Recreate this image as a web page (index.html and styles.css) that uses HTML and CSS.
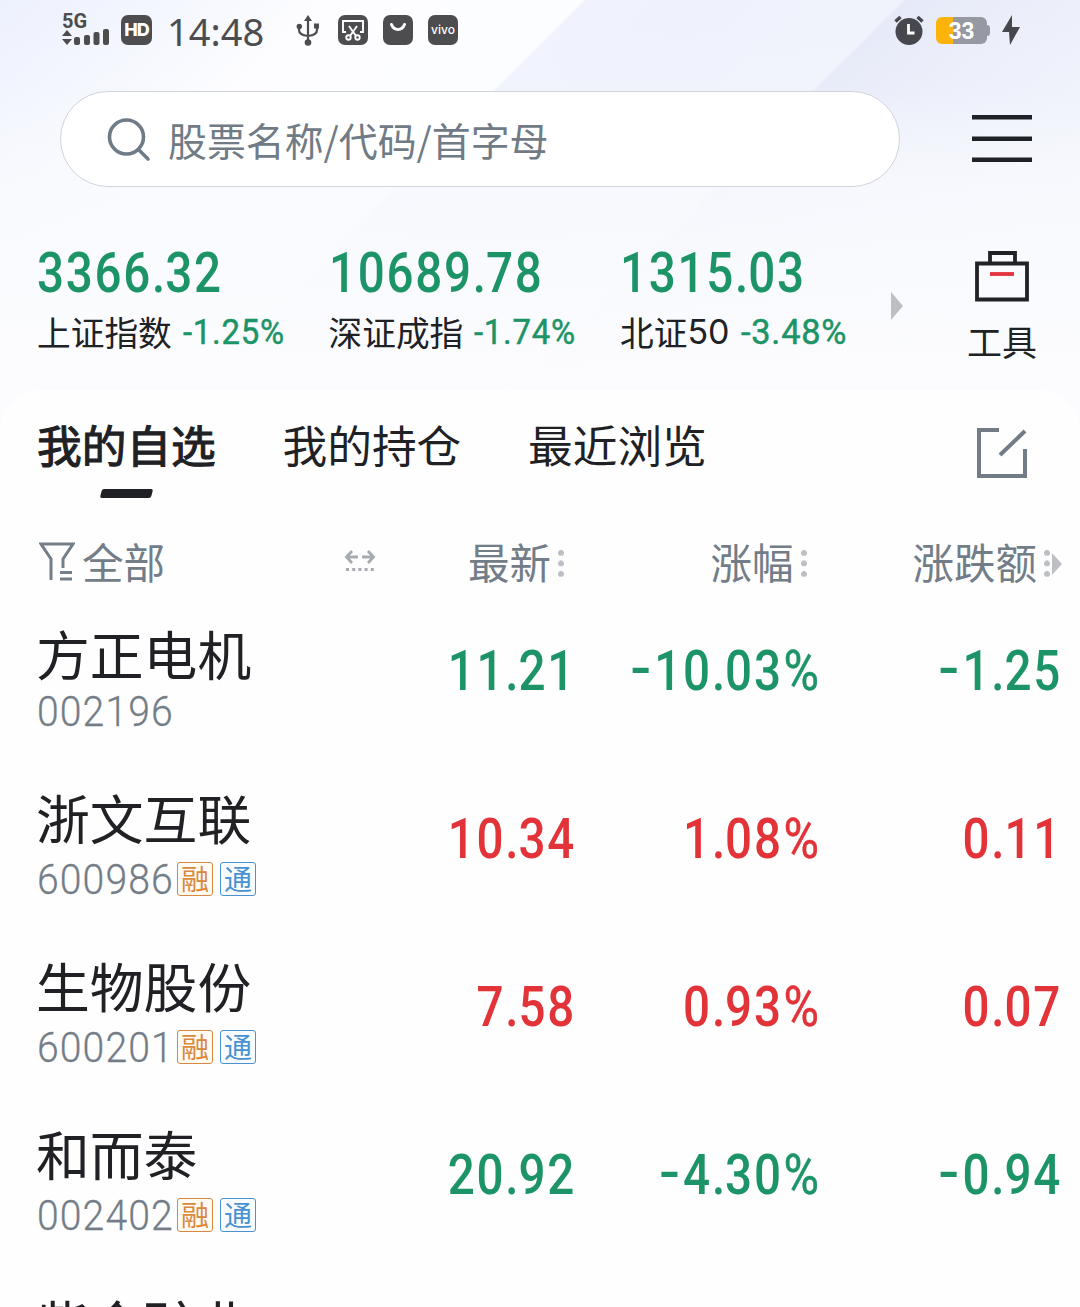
FILE: index.html
```html
<!DOCTYPE html>
<html lang="zh-CN">
<head>
<meta charset="utf-8">
<title>我的自选</title>
<link rel="stylesheet" href="styles.css">
</head>
<body>
<div class="app">
  <header class="top">
    <div class="status">
      <div class="signal">
        <span class="net">5G</span>
        <svg width="48" height="17" viewBox="0 0 48 17" fill="#4d4d4f"><path d="M5 2l5 6H0zM5 17l5-6H0z"/><rect x="12" y="9" width="6" height="8" rx="2"/><rect x="22" y="7" width="6" height="10" rx="2"/><rect x="31.500" y="4" width="6" height="13" rx="2"/><rect x="41" y="1" width="6" height="16" rx="2"/></svg>
      </div>
      <span class="chip hd">HD</span>
      <span class="time">14:48</span>
      <svg class="usb" width="24" height="32" viewBox="0 0 24 32" fill="none" stroke="#4d4d4f" stroke-width="2.200"><path d="M12 5v22M3 12v3q0 5 9 6M21 11v4q0 5-9 6"/><path d="M12 0l4 6H8z" fill="#4d4d4f" stroke="none"/><circle cx="3.300" cy="11.500" r="2.700" fill="#4d4d4f" stroke="none"/><path d="M18 8.500h5v5h-5z" fill="#4d4d4f" stroke="none"/><circle cx="12" cy="27.500" r="3.300" fill="#4d4d4f" stroke="none"/></svg>
      <span class="chip"><svg width="30" height="30" viewBox="0 0 30 30" fill="none" stroke="#fff" stroke-width="1.900"><path d="M8 17H5V6h20v11h-3M11 11l7 10M19 11l-7 10"/><circle cx="10.500" cy="22.500" r="2.200"/><circle cx="19.500" cy="22.500" r="2.200"/></svg></span>
      <span class="chip"><svg width="30" height="30" viewBox="0 0 30 30" fill="none" stroke="#fff" stroke-width="3" stroke-linecap="round"><path d="M8.500 9.500q2 5 6.500 5t6.500-5"/></svg></span>
      <span class="chip vivo">vivo</span>
      <div class="right">
        <svg width="30" height="30" viewBox="0 0 30 30"><circle cx="15" cy="16.500" r="13.500" fill="#47484d"/><path d="M1.500 6.500l5-4.500M23.500 2l5 4.500" stroke="#47484d" stroke-width="3.500"/><path d="M14.500 9v9h6" fill="none" stroke="#fff" stroke-width="2.800"/></svg>
        <span class="battery">33</span>
        <svg width="20" height="30" viewBox="0 0 20 30" fill="#47484d"><path d="M11 0L1 17h7l1 13L19 12h-8z"/></svg>
      </div>
    </div>

    <div class="search-row">
      <div class="search">
        <svg width="46" height="46" viewBox="0 0 46 46" fill="none" stroke="#6f7b87" stroke-width="3.600" stroke-linecap="round"><circle cx="19.500" cy="21" r="17"/><path d="M32 34L41 43"/></svg>
        <span>股票名称/代码/首字母</span>
      </div>
      <svg class="menu" width="60" height="48" viewBox="0 0 60 48" fill="#1e2125"><path d="M0 0h60v4.500H0zM0 21.500h60V26H0zM0 42.500h60V47H0z"/></svg>
    </div>

    <div class="indices">
      <div class="index">
        <div class="num big down">3366<i class="pt">.</i>32</div>
        <div class="label">上证指数<span class="num pct down">-1.25%</span></div>
      </div>
      <div class="index">
        <div class="num big down">10689<i class="pt">.</i>78</div>
        <div class="label">深证成指<span class="num pct down">-1.74%</span></div>
      </div>
      <div class="index third">
        <div class="num big down">1315<i class="pt">.</i>03</div>
        <div class="label">北证<span class="fifty">50</span><span class="num pct down">-3.48%</span></div>
      </div>
      <svg class="next" width="12" height="28" viewBox="0 0 12 28" fill="#bcbfc4"><path d="M0 0l12 14L0 28z"/></svg>
      <div class="tools">
        <svg width="56" height="52" viewBox="0 0 56 52" fill="none" stroke="#202226" stroke-width="3.800"><path d="M3 12.500h50v36H3zM16 12.500V2h25v10.500"/><path d="M16 23h24" stroke="#e2323c"/></svg>
        <span>工具</span>
      </div>
    </div>
  </header>

  <main class="panel">
    <nav class="tabs">
      <span class="tab active">我的自选</span>
      <span class="tab">我的持仓</span>
      <span class="tab">最近浏览</span>
      <svg class="edit" width="52" height="50" viewBox="0 0 52 50" fill="none" stroke="#727c86" stroke-width="4"><path d="M23 2H3v46h46V21"/><path d="M24 27L49 3"/></svg>
    </nav>

    <div class="head">
      <div class="filter">
        <svg width="36" height="40" viewBox="0 0 36 40" fill="none" stroke="#747e88" stroke-width="3"><path d="M12 38V17L2 2h32L24 17v9M21 30.500h12M21 37h12"/></svg>
        <span>全部</span>
      </div>
      <svg class="swap" width="32" height="24" viewBox="0 0 32 24" fill="none" stroke="#a7abb0" stroke-width="2.800"><path d="M8 2L2.500 8 8 14M2.500 8H14M24 2l5.500 6L24 14M29.500 8H18"/><path d="M2 20.500h29" stroke-dasharray="3 3.200"/></svg>
      <span class="col">最新<i class="dots"></i></span>
      <span class="col">涨幅<i class="dots"></i></span>
      <span class="col last">涨跌额<i class="dots"></i><svg width="10" height="22" viewBox="0 0 10 22" fill="#bdbfc3"><path d="M0 0l10 11L0 22z"/></svg></span>
    </div>

    <section class="list">
      <div class="row plain down">
        <div class="stock"><div class="name">方正电机</div><div class="meta"><span class="num code">002196</span></div></div>
        <span class="num val">11<i class="pt">.</i>21</span><span class="num val"><i class="mn">-</i>10<i class="pt">.</i>03<i class="pc">%</i></span><span class="num val"><i class="mn">-</i>1<i class="pt">.</i>25</span>
      </div>
      <div class="row up">
        <div class="stock"><div class="name">浙文互联</div><div class="meta"><span class="num code">600986</span><span class="badge rong">融</span><span class="badge tong">通</span></div></div>
        <span class="num val">10<i class="pt">.</i>34</span><span class="num val">1<i class="pt">.</i>08<i class="pc">%</i></span><span class="num val">0<i class="pt">.</i>11</span>
      </div>
      <div class="row up">
        <div class="stock"><div class="name">生物股份</div><div class="meta"><span class="num code">600201</span><span class="badge rong">融</span><span class="badge tong">通</span></div></div>
        <span class="num val">7<i class="pt">.</i>58</span><span class="num val">0<i class="pt">.</i>93<i class="pc">%</i></span><span class="num val">0<i class="pt">.</i>07</span>
      </div>
      <div class="row down">
        <div class="stock"><div class="name">和而泰</div><div class="meta"><span class="num code">002402</span><span class="badge rong">融</span><span class="badge tong">通</span></div></div>
        <span class="num val">20<i class="pt">.</i>92</span><span class="num val"><i class="mn">-</i>4<i class="pt">.</i>30<i class="pc">%</i></span><span class="num val"><i class="mn">-</i>0<i class="pt">.</i>94</span>
      </div>
      <div class="row next-row">
        <div class="stock"><div class="name">紫金矿业</div></div>
      </div>
    </section>
  </main>
</div>
</body>
</html>
```
FILE: styles.css
```css
* { box-sizing: border-box; }
body { margin: 0; background: #fff; color: #202124; font-family: "Noto Sans CJK SC", sans-serif; }
svg { display: block; flex: none; }
i { font-style: normal; }
.app { width: 1080px; height: 1307px; overflow: hidden; white-space: nowrap; }

.top {
  height: 430px;
  background:
    linear-gradient(180deg, rgba(250,251,254,0) 0, rgba(250,251,254,.1) 91px, rgba(249,250,254,.82) 187px, rgba(250,251,254,.92) 280px, #fcfcfe 390px),
    linear-gradient(135deg, #edf1fd 0, #f3f6fe 110px, #fdfdff 230px, #fcfdff 412px, #f0f3fd 415px, #eff2fc 500px, #f1f3fc 638px, #e6eaf8 641px, #eceffa 740px, #f1f4fc 900px);
}

.status { display: flex; align-items: flex-start; height: 91px; padding: 15px 59px 0 62px; }
.signal { width: 59px; margin-top: -3px; }
.net { display: block; height: 16px; font: 700 20px/18px Roboto, sans-serif; color: #4d4d4f; }
.chip { width: 30px; height: 30px; border-radius: 7px; background: #4d4d4f; color: #fff; flex: none; }
.hd { font: 800 18px/30px Inter, sans-serif; text-align: center; letter-spacing: -1px; width: 31px; }
.time { width: 98px; margin: 0 31px 0 15px; font: 400 38px/33px "Noto Sans", sans-serif; color: #4d4d4f; }
.usb { margin-right: 18px; }
.chip + .chip { margin-left: 15px; }
.vivo { font: 500 12px/29px Inter, sans-serif; text-align: center; }
.right { display: flex; margin-left: auto; }
.battery {
  width: 51px; height: 27px; margin: 2px 14px 0 12px; border-radius: 6px;
  background: linear-gradient(90deg, #fcb40a 17px, #9698a2 17px);
  color: #fff; font: 700 23px/29px "Liberation Sans", sans-serif; text-align: center; position: relative;
}
.battery::after { content: ""; position: absolute; left: 50px; top: 8px; width: 4px; height: 11px; border-radius: 0 3px 3px 0; background: #9698a2; }

.search-row { display: flex; padding-left: 60px; }
.search {
  display: flex; align-items: center; width: 840px; height: 96px; padding-left: 46px;
  border: 1px solid #cfd4da; border-radius: 48px; background: #fff;
  color: #707b86; font-size: 38.900px; line-height: 56px;
}
.search svg { margin-right: 15px; }
.menu { margin: 24px 0 0 72px; }

.num { font-family: Roboto, sans-serif; font-weight: 500; }
.down { color: #1d9467; }
.up { color: #e23338; }
.indices { display: flex; padding: 56px 0 0 37px; }
.index { width: 291.500px; }
.index.third { width: 271px; }
.big { width: max-content; font-size: 55px; line-height: 60px; letter-spacing: 2px; transform: scaleX(.865); transform-origin: 0 50%; }
.pt { letter-spacing: 0; }
.mn { display: inline-block; margin-right: 4px; transform: translateY(-3px) scaleX(1.3); }
.pc { margin-left: 1px; font-size: 56px; font-weight: 400; letter-spacing: 0; -webkit-text-stroke: .5px; }
.label { display: flex; align-items: center; margin-top: 3px; font-size: 33.700px; line-height: 50px; }
.fifty { font: 400 34px/50px Inter, sans-serif; }
.pct { margin: 2px 0 0 11px; font-size: 35px; font-weight: 400; letter-spacing: .8px; transform: scaleX(.94); transform-origin: 0 50%; -webkit-text-stroke: .5px; }
.third .pct { transform: scaleX(.98); }
.next { margin-top: 49px; }
.tools { width: 72px; margin: 8px 0 0 63px; display: flex; flex-direction: column; align-items: center; font-size: 35px; line-height: 50px; }
.tools span { margin-top: 13px; }

.panel { position: relative; margin-top: -40px; height: 917px; border-radius: 40px 40px 0 0; background: #fefefe; }
.tabs { display: flex; height: 130px; padding: 24px 52px 0 37px; font-size: 44.700px; line-height: 60px; }
.tab { width: 179px; margin-right: 66.500px; }
.active { -webkit-text-stroke: 1.100px #202124; }
.active::after { content: ""; display: block; width: 51px; height: 9px; margin: 15px auto 0; border-radius: 2px; background: #202124; transform: skewX(-15deg); }
.edit { margin: 14px 0 0 auto; }

.head { display: grid; grid-template-columns: 305px 127px 242.500px 243px 1fr; height: 67px; padding: 0 18px 0 39px; color: #727d88; font-size: 41.500px; line-height: 82px; }
.filter { display: flex; align-items: flex-start; }
.filter svg { margin: 22px 7px 0 0; }
.swap { margin-top: 29px; }
.col { display: flex; width: max-content; margin-left: -3px; }
.last { margin-left: -44px; }
.dots { width: 6px; height: 30px; margin: 29px 0 0 7px; background: radial-gradient(circle at 3px 4px, #bcbfc3 2.700px, transparent 3.200px) 0 0 / 6px 10.500px; }
.col svg { margin: 33px 0 0 2px; }

.row { display: grid; grid-template-columns: 295px 243px 243px 243px; height: 168px; padding-left: 37px; }
.stock { padding-top: 32px; }
.name { height: 60px; margin-left: -1px; color: #202124; font-size: 53.800px; line-height: 60px; }
.meta { display: flex; align-items: center; height: 40px; margin-top: 12px; }
.plain .stock { padding-top: 36px; }
.plain .meta { margin-top: 8px; }
.next-row .stock { padding-top: 34px; }
.code { width: 140px; color: #747d87; font-size: 43px; font-weight: 300; line-height: 40px; letter-spacing: 1.200px; transform: scaleX(.91); transform-origin: 0 50%; -webkit-text-stroke: .3px; }
.badge { width: 36px; height: 34px; margin-right: 7px; border: 1.500px solid; border-radius: 3px; font-size: 28px; line-height: 30px; text-align: center; }
.rong { color: #d8893c; background: #fffaf4; }
.tong { color: #4a92d2; background: #f8fcff; }
.val { margin-right: -1px; margin-left: 1px; font-size: 55px; line-height: 169px; text-align: right; letter-spacing: 2px; transform: scaleX(.865); transform-origin: 100% 50%; }
```
